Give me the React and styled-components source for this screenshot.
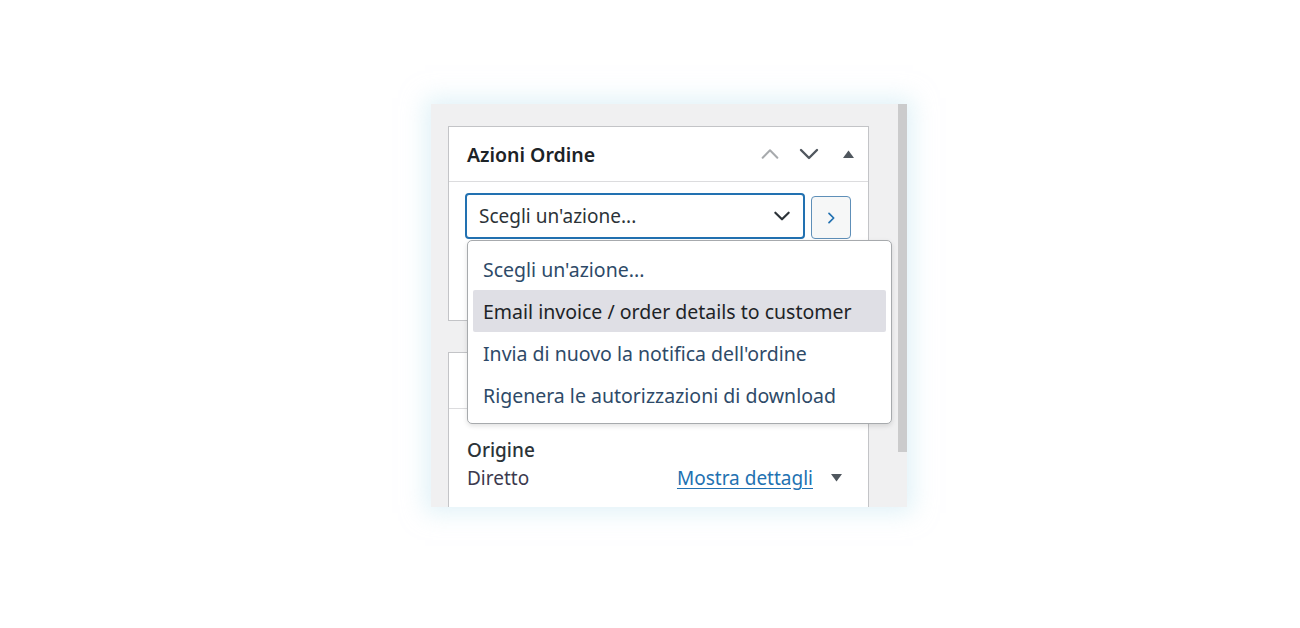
import React from "react";
import styled, { createGlobalStyle } from "styled-components";

const GlobalStyle = createGlobalStyle`
  html, body { margin: 0; padding: 0; background: #ffffff; }
  body { font-family: "Noto Sans", "Open Sans", sans-serif; }
  * { box-sizing: border-box; }
`;

const Page = styled.div`
  width: 1300px;
  height: 628px;
  padding: 104px 0 0 431px;
  background: #ffffff;
`;

const Frame = styled.div`
  position: relative;
  width: 476px;
  height: 403px;
  background: #f0f0f1;
  box-shadow: 0 0 22px 6px rgba(200, 232, 242, 0.55);
  display: flex;
  overflow: hidden;
`;

const Column = styled.div`
  flex: 1;
  padding: 22px 0 0 17px;
  display: flex;
  flex-direction: column;
  gap: 31px;
`;

const Scrollbar = styled.div`
  width: 9px;
  display: flex;
  flex-direction: column;
`;

const Thumb = styled.div`
  height: 348px;
  background: #cbcbcc;
`;

const Card = styled.div`
  width: 421px;
  background: #ffffff;
  border: 1px solid #c3c4c7;
  flex: ${(p) => (p.$grow ? "1" : "none")};
  border-bottom: ${(p) => (p.$grow ? "none" : "1px solid #c3c4c7")};
`;

const Header = styled.div`
  height: ${(p) => p.$h || 55}px;
  border-bottom: 1px solid #dcdcde;
  display: flex;
  align-items: center;
  padding: 0 0 0 18px;
`;

const Title = styled.h2`
  margin: 0;
  flex: 1;
  font-size: 19.5px;
  font-weight: 600;
  color: #1d2327;
`;

const IconButton = styled.span`
  width: ${(p) => p.$w || 39}px;
  display: flex;
  justify-content: center;
  align-items: center;
  color: ${(p) => p.$color};
`;

const Body = styled.div`
  padding: ${(p) => p.$pad || "11px 16px 0 16px"};
  height: ${(p) => (p.$h ? p.$h + "px" : "auto")};
`;

const ActionRow = styled.div`
  display: flex;
  gap: 6px;
  align-items: flex-start;
`;

const Select = styled.div`
  width: 340px;
  height: 46px;
  border: 2px solid #2271b1;
  border-radius: 4px;
  display: flex;
  align-items: center;
  justify-content: space-between;
  padding: 0 11px 0 12px;
  font-size: 19px;
  color: #2c3338;
`;

const SelectArrow = styled.span`
  display: flex;
  color: #2c3338;
`;

const GoButton = styled.div`
  margin-top: 3px;
  width: 40px;
  height: 43px;
  border: 1px solid #5e8fb8;
  border-radius: 4px;
  background: #f6f7f7;
  display: flex;
  align-items: center;
  justify-content: center;
  color: #2271b1;
`;

const Dropdown = styled.ul`
  position: absolute;
  left: 36px;
  top: 136px;
  width: 425px;
  height: 184px;
  margin: 0;
  padding: 7px 5px 6px 5px;
  list-style: none;
  background: #ffffff;
  border: 1px solid #a7aaad;
  border-radius: 5px;
  box-shadow: 0 2px 5px rgba(0, 0, 0, 0.12);
`;

const Option = styled.li`
  height: 42px;
  display: flex;
  align-items: center;
  padding-left: 10px;
  font-size: 19.5px;
  border-radius: 2px;
  white-space: nowrap;
  color: ${(p) => (p.$active ? "#1d2327" : "#2e4a68")};
  background: ${(p) => (p.$active ? "#dfdfe5" : "transparent")};
`;

const Label = styled.div`
  font-size: 19px;
  font-weight: 500;
  color: #2c3338;
  line-height: 26px;
`;

const DetailRow = styled.div`
  display: flex;
  align-items: center;
  font-size: 19px;
  color: #3c434a;
  line-height: 30px;
`;

const Value = styled.span`
  flex: 1;
  color: #3c3a4e;
`;

const Link = styled.a`
  color: #2271b1;
  text-decoration: underline;
  text-underline-offset: 3px;
  margin-right: 17px;
`;

const Caret = styled.span`
  display: flex;
  color: #50575e;
  margin-right: 25px;
`;

const Chevron = ({ dir = "down", size = 18, stroke = 2.4 }) => {
  const paths = {
    down: "M4 8 L12 16 L20 8",
    up: "M4 16 L12 8 L20 16",
    right: "M9 5 L16 12 L9 19",
  };
  return (
    <svg width={size} height={size} viewBox="0 0 24 24" fill="none">
      <path d={paths[dir]} stroke="currentColor" strokeWidth={stroke} strokeLinecap="round" strokeLinejoin="round" />
    </svg>
  );
};

const Triangle = ({ up }) => (
  <svg width="13" height="10" viewBox="0 0 13 10">
    <path d={up ? "M1 9 L6.5 1.5 L12 9 Z" : "M1 1 L6.5 8.5 L12 1 Z"} fill="currentColor" />
  </svg>
);

export default function App() {
  return (
    <>
      <GlobalStyle />
      <Page>
        <Frame>
          <Column>
            <Card>
              <Header>
                <Title>Azioni Ordine</Title>
                <IconButton $color="#a7aaad"><Chevron dir="up" size={22} stroke={2.2} /></IconButton>
                <IconButton $color="#50575e"><Chevron dir="down" size={24} stroke={2.4} /></IconButton>
                <IconButton $color="#50575e" $w={40}><Triangle up /></IconButton>
              </Header>
              <Body $h={138}>
                <ActionRow>
                  <Select>
                    <span>Scegli un'azione...</span>
                    <SelectArrow><Chevron dir="down" size={20} stroke={2.6} /></SelectArrow>
                  </Select>
                  <GoButton><Chevron dir="right" size={16} stroke={2.6} /></GoButton>
                </ActionRow>
              </Body>
            </Card>
            <Card $grow>
              <Header $h={56} />
              <Body $pad="28px 0 0 18px">
                <Label>Origine</Label>
                <DetailRow>
                  <Value>Diretto</Value>
                  <Link>Mostra dettagli</Link>
                  <Caret><Triangle /></Caret>
                </DetailRow>
              </Body>
            </Card>
          </Column>
          <Scrollbar>
            <Thumb />
          </Scrollbar>
          <Dropdown>
            <Option>Scegli un'azione...</Option>
            <Option $active>Email invoice / order details to customer</Option>
            <Option>Invia di nuovo la notifica dell'ordine</Option>
            <Option>Rigenera le autorizzazioni di download</Option>
          </Dropdown>
        </Frame>
      </Page>
    </>
  );
}
